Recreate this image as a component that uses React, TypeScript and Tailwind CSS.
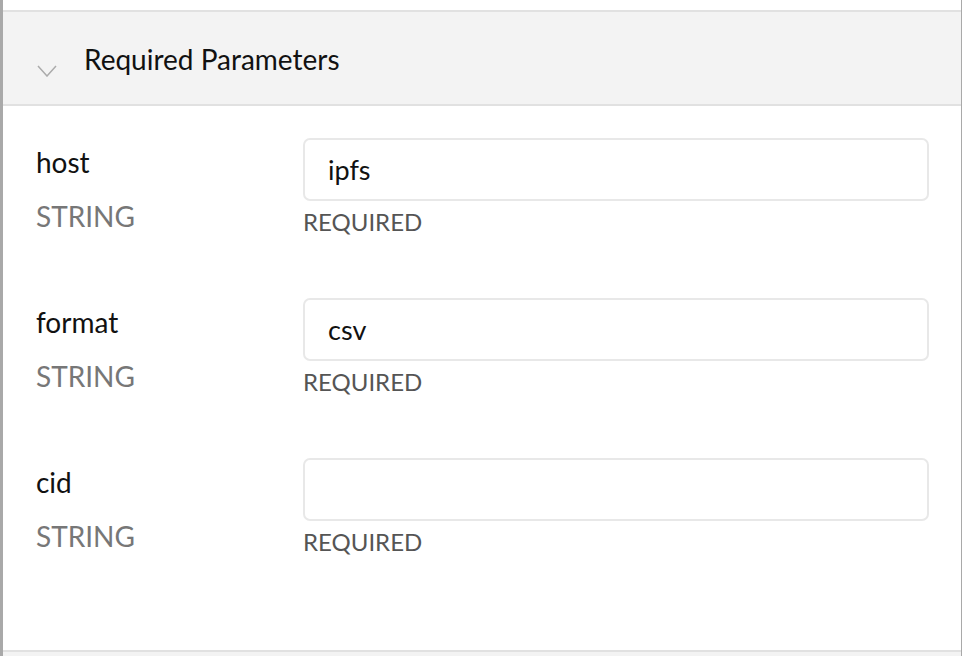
import React from 'react';

const params = [
  { name: 'host', type: 'STRING', value: 'ipfs' },
  { name: 'format', type: 'STRING', value: 'csv' },
  { name: 'cid', type: 'STRING', value: '' },
];

export default function App() {
  return (
    <div
      className="w-[962px] h-[656px] overflow-hidden bg-white border-l-[3px] border-r border-[#a9a9a9]"
      style={{ fontFamily: 'Lato, "Open Sans", sans-serif' }}
    >
      <div className="h-[10px]" />
      <div className="h-[96px] border-y-2 border-[#e1e1e1] bg-[#f3f3f3] flex items-center">
        <svg
          className="ml-[34px] mt-[25px] w-[20px] h-[12px]"
          viewBox="0 0 20 12"
          fill="none"
          stroke="#ababab"
          strokeWidth="1.5"
        >
          <path d="M1 1 L10 11 L19 1" />
        </svg>
        <h3 className="ml-[27px] mt-[2px] text-[28px] leading-[32px] text-[#111]">Required Parameters</h3>
      </div>

      <div className="h-[544px] pt-[32px] pl-[33px] pr-[32px] flex flex-col gap-[63px]">
        {params.map((p) => (
          <div key={p.name} className="flex items-start">
            <div className="w-[267px] pt-[8px]">
              <p className="text-[28px] leading-[32px] text-[#111]">{p.name}</p>
              <p className="mt-[22px] text-[28px] leading-[32px] text-[#777]">{p.type}</p>
            </div>
            <div className="flex-1">
              <div className="h-[63px] rounded-[7px] border-2 border-[#e8e8e8] flex items-center pl-[23px] pt-[2px] text-[27px] text-[#111]">
                {p.value}
              </div>
              <p className="mt-[8px] text-[24px] leading-[26px] text-[#555]">REQUIRED</p>
            </div>
          </div>
        ))}
      </div>

      <div className="h-[6px] border-t-2 border-[#e1e1e1] bg-[#f3f3f3]" />
    </div>
  );
}
